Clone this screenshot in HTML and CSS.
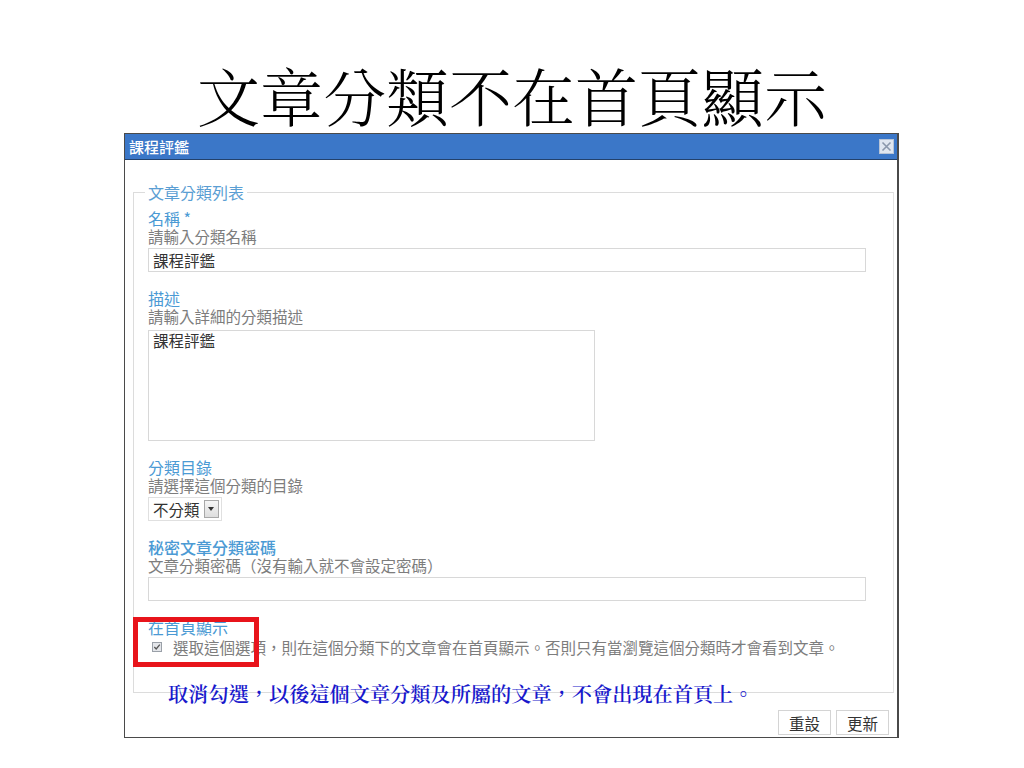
FILE: index.html
```html
<!DOCTYPE html>
<html lang="zh-Hant">
<head>
    <meta charset="UTF-8">
    <meta name="viewport" content="width=device-width, initial-scale=1.0">
    <title>文章分類不在首頁顯示</title>
    <link rel="stylesheet" href="styles.css">
</head>
<body>
    <div id="slide">
        <h1 class="slide-title">文章分類不在首頁顯示</h1>

        <div class="dialog">
            <div class="dialog-titlebar">
                <span class="dialog-title">課程評鑑</span>
                <span class="dialog-close">
                    <svg width="15" height="15" viewBox="0 0 15 15">
                        <rect x="0.5" y="0.5" width="14" height="14" fill="#dfe6f0" stroke="#b8c4d6"/>
                        <path d="M3.5 3.5 L11.5 11.5 M11.5 3.5 L3.5 11.5" stroke="#8a97ab" stroke-width="1.6"/>
                    </svg>
                </span>
            </div>

            <div class="dialog-body">
                <fieldset class="form-box">
                    <legend>文章分類列表</legend>

                    <div class="field">
                        <div class="field-label">名稱 *</div>
                        <div class="field-hint">請輸入分類名稱</div>
                        <input type="text" class="text-input wide" value="課程評鑑">
                    </div>

                    <div class="field">
                        <div class="field-label">描述</div>
                        <div class="field-hint">請輸入詳細的分類描述</div>
                        <textarea class="text-area">課程評鑑</textarea>
                    </div>

                    <div class="field field-after-area">
                        <div class="field-label">分類目錄</div>
                        <div class="field-hint">請選擇這個分類的目錄</div>
                        <div class="select-box">
                            <span class="select-value">不分類</span>
                            <span class="select-arrow">
                                <svg width="6" height="4" viewBox="0 0 6 4"><path d="M0 0 L6 0 L3 4 Z" fill="#333"/></svg>
                            </span>
                        </div>
                    </div>

                    <div class="field">
                        <div class="field-label strong">秘密文章分類密碼</div>
                        <div class="field-hint">文章分類密碼（沒有輸入就不會設定密碼）</div>
                        <input type="text" class="text-input wide" value="">
                    </div>

                    <div class="field">
                        <div class="field-label">在首頁顯示</div>
                        <div class="check-row">
                            <span class="check-box">
                                <svg width="10" height="10" viewBox="0 0 10 10">
                                    <rect x="0.5" y="0.5" width="9" height="9" fill="#e4e6ea" stroke="#9aa0a8"/>
                                    <path d="M2.3 5 L4.2 7 L7.8 2.6" fill="none" stroke="#555" stroke-width="1.3"/>
                                </svg>
                            </span>
                            <span class="field-hint">選取這個選項，則在這個分類下的文章會在首頁顯示。否則只有當瀏覽這個分類時才會看到文章。</span>
                        </div>
                    </div>
                </fieldset>

                <div class="dialog-buttons">
                    <button class="btn">重設</button>
                    <button class="btn">更新</button>
                </div>
            </div>
        </div>

        <!-- annotations on top of the screenshot -->
        <div class="highlight-box"></div>
        <div class="note">取消勾選，以後這個文章分類及所屬的文章，不會出現在首頁上。</div>
    </div>
</body>
</html>
```

FILE: styles.css
```css
body {
    margin: 0;
    padding: 0;
    background: #ffffff;
    font-family: "Noto Sans CJK TC", "Noto Sans", sans-serif;
}

#slide {
    position: relative;
    width: 1024px;
    height: 768px;
    overflow: hidden;
}

.slide-title {
    margin: 62px 0 0 0;
    height: 71px;
    font-family: "Noto Serif CJK TC", "Liberation Serif", "Noto Sans CJK TC", serif;
    font-weight: 300;
    font-size: 63px;
    line-height: 63px;
    text-align: center;
    color: #000;
}

.dialog {
    margin-left: 124px;
    width: 772px;
    border: 1px solid #4a4a4a;
    border-right-width: 2px;
    background: #fff;
}

.dialog-titlebar {
    height: 25px;
    background: #3b77c8;
    border-bottom: 1px solid #23416b;
    display: flex;
    align-items: center;
    justify-content: space-between;
    padding: 0 3px 0 4px;
}

.dialog-title {
    color: #fff;
    font-size: 15px;
    font-weight: 500;
}

.dialog-close {
    display: flex;
}

.dialog-body {
    padding: 23px 3px 2px 8px;
}

.form-box {
    margin: 0;
    padding: 8px 10px 36px 14px;
    border: 1px solid #dcdcdc;
    border-right-color: #e4e4e4;
}

.form-box legend {
    padding: 0 3px;
    margin-left: -3px;
    font-size: 16px;
    line-height: 18px;
    color: #5a9ed3;
}

.field {
    margin-bottom: 17px;
}

.field:last-child {
    margin-bottom: 0;
}

.field-after-area {
    margin-top: 3px;
}

.field-label {
    font-size: 16px;
    line-height: 18px;
    color: #4b9ad4;
}

.field-label.strong {
    font-weight: 500;
}

.field-hint {
    font-size: 15.5px;
    line-height: 18px;
    color: #7d7d7d;
}

.text-input {
    display: block;
    box-sizing: border-box;
    margin-top: 3px;
    height: 24px;
    padding: 1px 4px;
    border: 1px solid #d8d8d8;
    font-family: "Noto Sans CJK TC", sans-serif;
    font-size: 15.5px;
    color: #333;
    outline: none;
}

.text-input.wide {
    width: 718px;
}

.text-area {
    display: block;
    box-sizing: border-box;
    margin-top: 5px;
    width: 447px;
    height: 111px;
    padding: 0 4px;
    border: 1px solid #d8d8d8;
    font-family: "Noto Sans CJK TC", sans-serif;
    font-size: 15.5px;
    line-height: 19px;
    color: #333;
    resize: none;
    outline: none;
}

.select-box {
    margin-top: 3px;
    display: inline-flex;
    align-items: center;
    height: 24px;
    box-sizing: border-box;
    padding: 0 2px 0 4px;
    border: 1px solid #e0e0e0;
    gap: 4px;
}

.select-value {
    font-size: 15.5px;
    color: #333;
    line-height: 18px;
}

.select-arrow {
    width: 15px;
    height: 18px;
    box-sizing: border-box;
    border: 1px solid #a8a8a8;
    background: linear-gradient(#f6f6f6, #dedede);
    display: flex;
    align-items: center;
    justify-content: center;
}

.check-row {
    margin-top: 2px;
    display: flex;
    align-items: center;
    gap: 11px;
    padding-left: 4px;
}

.check-box {
    display: flex;
}

.dialog-buttons {
    display: flex;
    justify-content: flex-end;
    gap: 5px;
    margin-top: 17px;
    padding-right: 5px;
}

.btn {
    height: 25px;
    width: 53px;
    padding: 0;
    background: #fff;
    border: 1px solid #d4d4d4;
    font-family: "Noto Sans CJK TC", sans-serif;
    font-size: 15.5px;
    color: #333;
    cursor: pointer;
}

.highlight-box {
    position: absolute;
    left: 133px;
    top: 617px;
    width: 116px;
    height: 40px;
    border: 5px solid #e8141b;
}

.note {
    position: absolute;
    left: 168px;
    top: 682px;
    font-family: "Noto Serif CJK TC", "Noto Sans CJK TC", serif;
    font-size: 20.2px;
    font-weight: 600;
    line-height: 24px;
    color: #1818cc;
    white-space: nowrap;
}
```
